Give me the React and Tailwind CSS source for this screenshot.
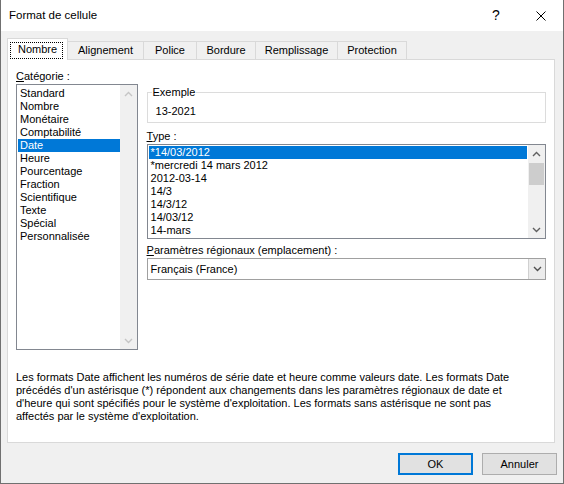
import React from 'react';

const categories = [
  'Standard', 'Nombre', 'Monétaire', 'Comptabilité', 'Date', 'Heure',
  'Pourcentage', 'Fraction', 'Scientifique', 'Texte', 'Spécial', 'Personnalisée',
];

const types = [
  '*14/03/2012', '*mercredi 14 mars 2012', '2012-03-14', '14/3', '14/3/12', '14/03/12', '14-mars',
];

const tabs = [
  { label: 'Nombre', w: 'w-[61px]' },
  { label: 'Alignement', w: 'w-[77px]' },
  { label: 'Police', w: 'w-[54px]' },
  { label: 'Bordure', w: 'w-[60px]' },
  { label: 'Remplissage', w: 'w-[83px]' },
  { label: 'Protection', w: 'w-[70px]' },
];

const Chevron = ({ up, color }) => (
  <svg width="9" height="6" viewBox="0 0 9 6" fill="none" stroke={color} strokeWidth="1.4">
    <path d={up ? 'M1 5l3.5-3.5L8 5' : 'M1 1l3.5 3.5L8 1'} />
  </svg>
);

const ScrollBar = ({ disabled }) => {
  const color = disabled ? '#c5c5c5' : '#606060';
  return (
    <div className="w-[17px] bg-[#f0f0f0] flex flex-col">
      <div className="h-[17px] flex items-center justify-center">
        <Chevron up color={color} />
      </div>
      <div className="flex-1 pt-[1px] px-[1px]">
        {!disabled && <div className="h-[22px] bg-[#cdcdcd]" />}
      </div>
      <div className="h-[17px] flex items-center justify-center">
        <Chevron color={color} />
      </div>
    </div>
  );
};

const App = () => {
  return (
    <div className="w-[564px] h-[484px] bg-[#f0f0f0] border-x border-b border-[#707070] flex flex-col text-[11px] text-black font-['Liberation_Sans',Arial,sans-serif]">
      {/* title bar */}
      <div className="h-[31px] bg-white flex items-center pl-[8px] shrink-0">
        <span className="flex-1 text-[11.5px]">Format de cellule</span>
        <span className="w-[20px] text-center text-[14px] mr-[30px]">?</span>
        <svg className="mr-[17px]" width="10" height="10" viewBox="0 0 10 10" stroke="#000" strokeWidth="1">
          <path d="M0.5 0.5l9 9M9.5 0.5l-9 9" />
        </svg>
      </div>

      {/* tabs and panel */}
      <div className="pl-[6px] pr-[8px] pt-[7px]">
        <div className="flex items-end h-[21px]">
          {tabs.map((t, i) =>
            i === 0 ? (
              <div
                key={t.label}
                className={`${t.w} h-[22px] -mb-px relative z-10 bg-white border border-b-0 border-[#d9d9d9] flex items-center justify-center`}
              >
                <span>{t.label}</span>
                <div className="absolute left-[2px] right-[4px] top-[3px] bottom-[1px] border border-dotted border-black" />
              </div>
            ) : (
              <div
                key={t.label}
                className={`${t.w} h-[18px] -ml-px border border-b-0 border-[#d9d9d9] bg-[#f0f0f0] flex items-center justify-center`}
              >
                {t.label}
              </div>
            )
          )}
        </div>

        <div className="h-[384px] border border-[#d9d9d9] bg-white px-[8px] pt-[8px]">
          <div className="flex gap-[9px]">
            {/* category column */}
            <div className="w-[122px] flex flex-col">
              <div className="h-[16px] leading-[16px]">
                <span className="underline">C</span>atégorie :
              </div>
              <div className="h-[266px] border border-[#828790] flex">
                <div className="flex-1 pt-[2px] pl-[1px]">
                  {categories.map((c) => (
                    <div
                      key={c}
                      className={`h-[13px] leading-[13px] pl-[2px] ${c === 'Date' ? 'bg-[#0078d7] text-white' : ''}`}
                    >
                      {c}
                    </div>
                  ))}
                </div>
                <ScrollBar disabled />
              </div>
            </div>

            {/* right column */}
            <div className="w-[401px] flex flex-col pt-[16px]">
              <fieldset className="h-[39px] border border-[#dcdcdc]">
                <legend className="ml-[4px] px-[1px] leading-[16px]">Exemple</legend>
                <div className="pl-[8px] pt-[3px] leading-[16px]">13-2021</div>
              </fieldset>

              <div className="mt-[5px] h-[16px] leading-[16px]">
                <span className="underline">T</span>ype :
              </div>
              <div className="h-[95px] border border-[#828790] flex">
                <div className="flex-1 pt-[1px] pl-[1px] pr-[1px]">
                  {types.map((t, i) => (
                    <div
                      key={t}
                      className={`h-[13px] leading-[13px] pl-[2px] ${i === 0 ? 'bg-[#0078d7] text-white' : ''}`}
                    >
                      {t}
                    </div>
                  ))}
                </div>
                <ScrollBar />
              </div>

              <div className="mt-[3px] h-[16px] leading-[16px]">
                <span className="underline">P</span>aramètres régionaux (emplacement) :
              </div>
              <div className="h-[22px] border border-[#a0a0a0] flex items-center">
                <span className="flex-1 pl-[3px]">Français (France)</span>
                <div className="w-[17px] h-[20px] bg-[#ececec] border-l border-[#d0d0d0] flex items-center justify-center">
                  <Chevron color="#505050" />
                </div>
              </div>
            </div>
          </div>

          <p className="mt-[21px] leading-[13px] whitespace-nowrap">
            Les formats Date affichent les numéros de série date et heure comme valeurs date. Les formats Date
            <br />
            précédés d'un astérisque (*) répondent aux changements dans les paramètres régionaux de date et
            <br />
            d'heure qui sont spécifiés pour le système d'exploitation. Les formats sans astérisque ne sont pas
            <br />
            affectés par le système d'exploitation.
          </p>
        </div>
      </div>

      {/* buttons */}
      <div className="flex justify-end gap-[9px] mt-[10px] pr-[6px]">
        <button className="w-[75px] h-[22px] bg-[#e1e1e1] border-2 border-[#0078d7]">OK</button>
        <button className="w-[75px] h-[22px] bg-[#e1e1e1] border border-[#adadad]">Annuler</button>
      </div>
    </div>
  );
};

export default App;
